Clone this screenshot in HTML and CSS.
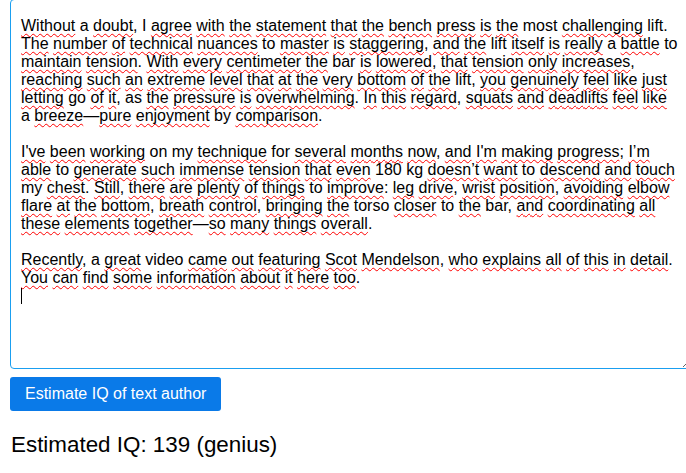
FILE: index.html
```html
<!DOCTYPE html>
<html lang="en">
<head>
<meta charset="utf-8">
<title>IQ estimator</title>
<link rel="stylesheet" href="styles.css">
</head>
<body>
<main class="page">
  <div class="editor" contenteditable="true" spellcheck="false">
    <p><span class="e">Without</span> a <span class="e">doubt</span>, I <span class="e">agree</span> <span class="e">with</span> <span class="e">the</span> <span class="e">statement</span> <span class="e">that</span> <span class="e">the</span> <span class="e">bench</span> <span class="e">press</span> <span class="e">is</span> <span class="e">the</span> most <span class="e">challenging</span> lift. <span class="e">The</span> <span class="e">number</span> <span class="e">of</span> <span class="e">technical</span> <span class="e">nuances</span> to <span class="e">master</span> <span class="e">is</span> <span class="e">staggering</span>, <span class="e">and</span> <span class="e">the</span> lift <span class="e">itself</span> <span class="e">is</span> <span class="e">really</span> a <span class="e">battle</span> to <span class="e">maintain</span> <span class="e">tension</span>. <span class="e">With</span> <span class="e">every</span> <span class="e">centimeter</span> <span class="e">the</span> bar <span class="e">is</span> <span class="e">lowered</span>, <span class="e">that</span> <span class="e">tension</span> <span class="e">only</span> <span class="e">increases</span>, <span class="e">reaching</span> <span class="e">such</span> <span class="e">an</span> <span class="e">extreme</span> <span class="e">level</span> <span class="e">that</span> <span class="e">at</span> <span class="e">the</span> <span class="e">very</span> <span class="e">bottom</span> <span class="e">of</span> <span class="e">the</span> lift, <span class="e">you</span> <span class="e">genuinely</span> <span class="e">feel</span> <span class="e">like</span> <span class="e">just</span> <span class="e">letting</span> go <span class="e">of</span> <span class="e">it</span>, as <span class="e">the</span> <span class="e">pressure</span> <span class="e">is</span> <span class="e">overwhelming</span>. <span class="e">In</span> <span class="e">this</span> <span class="e">regard</span>, <span class="e">squats</span> <span class="e">and</span> <span class="e">deadlifts</span> <span class="e">feel</span> <span class="e">like</span> a&nbsp;<span class="e">breeze</span>—<span class="e">pure</span> <span class="e">enjoyment</span> by <span class="e">comparison</span>.</p>
    <p><span class="e">I've</span> <span class="e">been</span> <span class="e">working</span> on my <span class="e">technique</span> for <span class="e">several</span> <span class="e">months</span> <span class="e">now</span>, <span class="e">and</span> <span class="e">I'm</span> <span class="e">making</span> <span class="e">progress</span>; <span class="e">I’m</span> <span class="e">able</span> to <span class="e">generate</span> <span class="e">such</span> <span class="e">immense</span> <span class="e">tension</span> <span class="e">that</span> <span class="e">even</span> 180 kg <span class="e">doesn’t</span> <span class="e">want</span> to <span class="e">descend</span> <span class="e">and</span> <span class="e">touch</span> my <span class="e">chest</span>. <span class="e">Still</span>, <span class="e">there</span> <span class="e">are</span> <span class="e">plenty</span> <span class="e">of</span> <span class="e">things</span> to <span class="e">improve</span>: <span class="e">leg</span> <span class="e">drive</span>, <span class="e">wrist</span> <span class="e">position</span>, <span class="e">avoiding</span> <span class="e">elbow</span> <span class="e">flare</span> <span class="e">at</span> <span class="e">the</span> <span class="e">bottom</span>, <span class="e">breath</span> <span class="e">control</span>, <span class="e">bringing</span> <span class="e">the</span> torso <span class="e">closer</span> to <span class="e">the</span> bar, <span class="e">and</span> <span class="e">coordinating</span> <span class="e">all</span> <span class="e">these</span> <span class="e">elements</span> <span class="e">together</span>—<span class="e">so</span> <span class="e">many</span> <span class="e">things</span> <span class="e">overall</span>.</p>
    <p><span class="e">Recently</span>, a <span class="e">great</span> video <span class="e">came</span> <span class="e">out</span> <span class="e">featuring</span> <span class="e">Scot</span> <span class="e">Mendelson</span>, <span class="e">who</span> <span class="e">explains</span> <span class="e">all</span> <span class="e">of</span> <span class="e">this</span> <span class="e">in</span> <span class="e">detail</span>. <span class="e">You</span> <span class="e">can</span> <span class="e">find</span> <span class="e">some</span> <span class="e">information</span> <span class="e">about</span> <span class="e">it</span> <span class="e">here</span> <span class="e">too</span>.<br><span class="caret"></span></p>
  </div>
  <button class="btn" type="button">Estimate IQ of text author</button>
  <p class="result">Estimated IQ: 139 (genius)</p>
</main>
</body>
</html>
```

FILE: styles.css
```css
html,
body {
  margin: 0;
  padding: 0;
  overflow: hidden;
  background: #ffffff;
}

body {
  font-family: "Liberation Sans", Arial, sans-serif;
  color: #000000;
}

.page {
  display: flex;
  flex-direction: column;
  align-items: flex-start;
  padding-left: 10px;
}

.editor {
  box-sizing: border-box;
  flex: none;
  width: 682px;
  height: 370px;
  margin-top: -1px;
  padding: 17px 10px 10px;
  border: 1px solid #1a9ff0;
  border-radius: 4px;
  font-size: 16px;
  line-height: 18px;
  overflow: auto;
  resize: vertical;
  outline: none;
}

.editor p {
  margin: 0 0 18px;
}

.editor p:last-child {
  margin-bottom: 0;
}

.e {
  text-decoration-line: underline;
  text-decoration-style: wavy;
  text-decoration-color: #ff0000;
  text-decoration-thickness: 1px;
  text-underline-offset: 2px;
  text-decoration-skip-ink: none;
}

.caret {
  display: inline-block;
  width: 1px;
  height: 16px;
  background: #000000;
  vertical-align: -3px;
}

.btn {
  margin-top: 8px;
  padding: 8px 15px;
  border: none;
  border-radius: 3px;
  background: #0a7ae8;
  color: #ffffff;
  font-family: "Liberation Sans", Arial, sans-serif;
  font-size: 16px;
  line-height: 18px;
  cursor: pointer;
}

.result {
  margin: 21px 0 0 1px;
  font-size: 22.4px;
}
```
